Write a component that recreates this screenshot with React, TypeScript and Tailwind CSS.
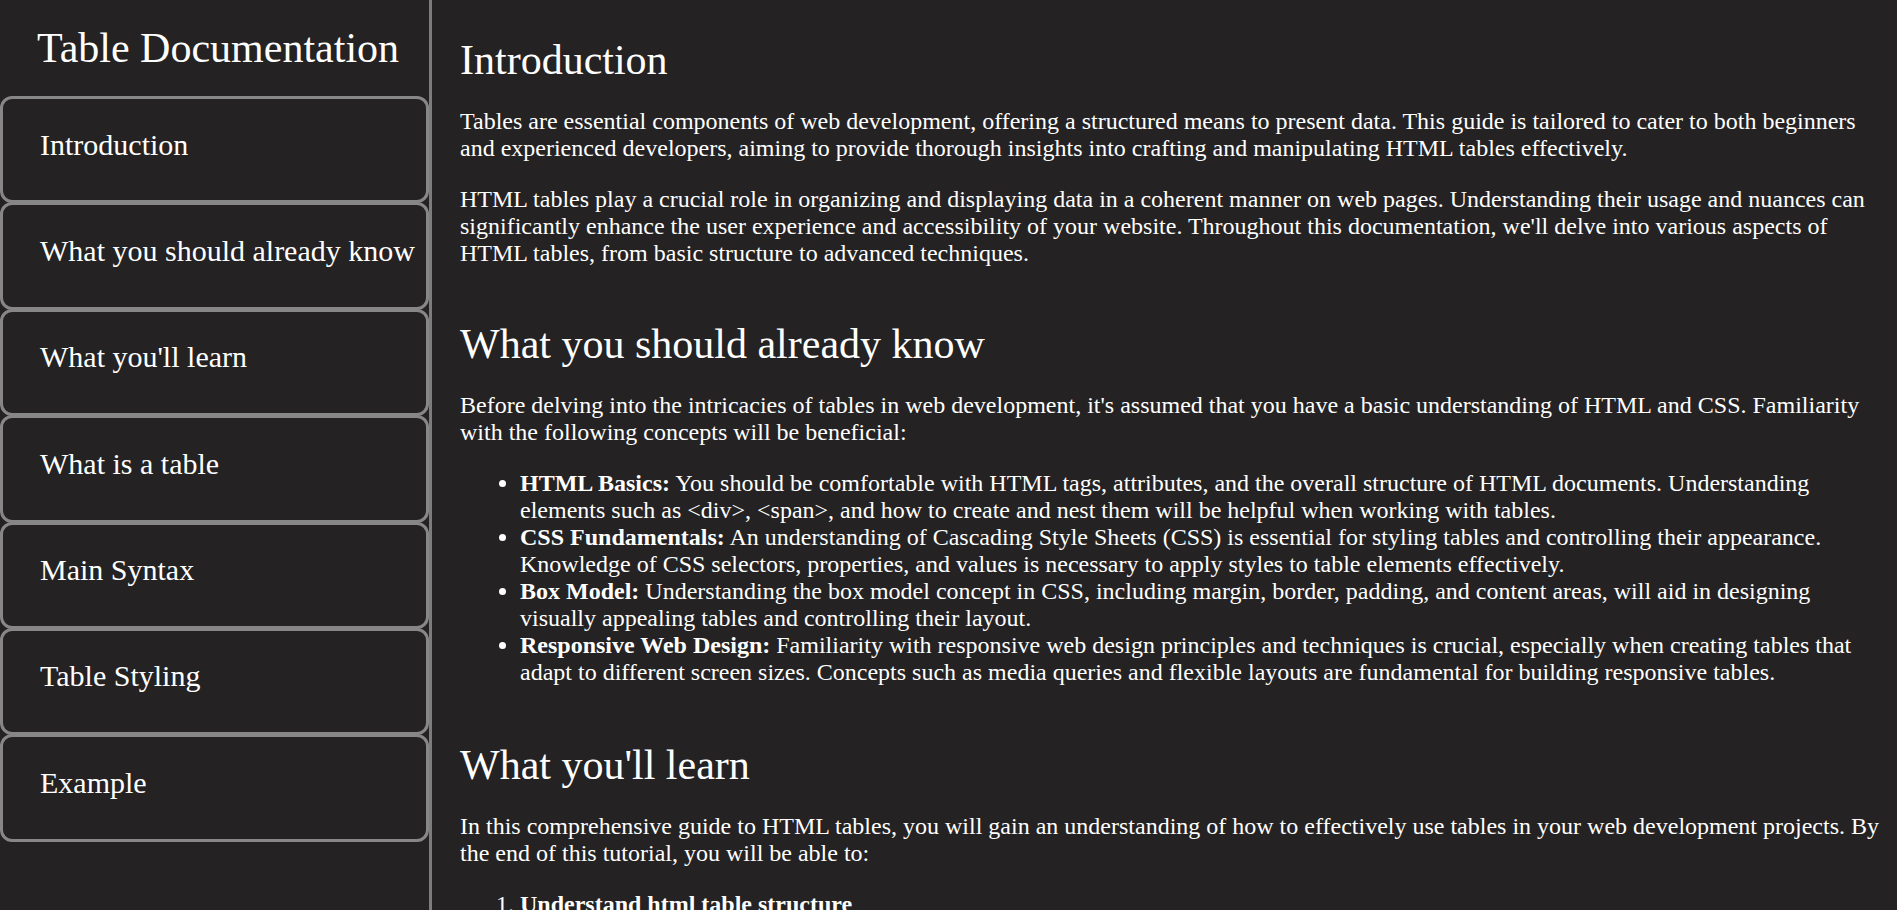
const navItems = [
  "Introduction",
  "What you should already know",
  "What you'll learn",
  "What is a table",
  "Main Syntax",
  "Table Styling",
  "Example",
];

function Sidebar() {
  return (
    <nav className="w-[432px] shrink-0 h-full border-r-[3px] border-[#7d7d7d] flex flex-col">
      <header className="py-6 pl-[7px] text-center text-[42px] leading-[48px]">Table Documentation</header>
      <ul>
        {navItems.map((item, i) => (
          <li
            key={item}
            className={`h-[107.4px] border-[3px] border-[#878787] rounded-xl pl-[37px] pt-[28.5px] text-[30px] leading-[34px] ${
              i > 0 ? "-mt-px" : ""
            }`}
          >
            <a href={`#${item.replace(/ /g, "_")}`}>{item}</a>
          </li>
        ))}
      </ul>
    </nav>
  );
}

function SectionTitle({ children }: { children: React.ReactNode }) {
  return <h2 className="text-[42px] leading-[48px] mb-6">{children}</h2>;
}

export default function App() {
  return (
    <div className="h-screen overflow-hidden flex bg-[#242223] text-white font-['Liberation_Serif',serif]">
      <Sidebar />
      <main className="flex-1 pl-[28px] pr-[12px] pt-[36px] text-[24px] leading-[27px]">
        <section id="Introduction">
          <SectionTitle>Introduction</SectionTitle>
          <p className="my-6">
            Tables are essential components of web development, offering a structured means to present data. This guide
            is tailored to cater to both beginners and experienced developers, aiming to provide thorough insights into
            crafting and manipulating HTML tables effectively.
          </p>
          <p className="my-6">
            HTML tables play a crucial role in organizing and displaying data in a coherent manner on web pages.
            Understanding their usage and nuances can significantly enhance the user experience and accessibility of
            your website. Throughout this documentation, we'll delve into various aspects of HTML tables, from basic
            structure to advanced techniques.
          </p>
        </section>

        <section id="What_you_should_already_know" className="mt-[53px]">
          <SectionTitle>What you should already know</SectionTitle>
          <p className="my-6">
            Before delving into the intricacies of tables in web development, it's assumed that you have a basic
            understanding of HTML and CSS. Familiarity with the following concepts will be beneficial:
          </p>
          <ul className="list-disc pl-[60px] my-6">
            <li>
              <b>HTML Basics:</b> You should be comfortable with HTML tags, attributes, and the overall structure of
              HTML documents. Understanding elements such as &lt;div&gt;, &lt;span&gt;, and how to create and nest them
              will be helpful when working with tables.
            </li>
            <li>
              <b>CSS Fundamentals:</b> An understanding of Cascading Style Sheets (CSS) is essential for styling tables
              and controlling their appearance. Knowledge of CSS selectors, properties, and values is necessary to apply
              styles to table elements effectively.
            </li>
            <li>
              <b>Box Model:</b> Understanding the box model concept in CSS, including margin, border, padding, and
              content areas, will aid in designing visually appealing tables and controlling their layout.
            </li>
            <li>
              <b>Responsive Web Design:</b> Familiarity with responsive web design principles and techniques is crucial,
              especially when creating tables that adapt to different screen sizes. Concepts such as media queries and
              flexible layouts are fundamental for building responsive tables.
            </li>
          </ul>
        </section>

        <section id="What_you'll_learn" className="mt-[55px]">
          <SectionTitle>What you'll learn</SectionTitle>
          <p className="my-6">
            In this comprehensive guide to HTML tables, you will gain an understanding of how to effectively use tables
            in your web development projects. By the end of this tutorial, you will be able to:
          </p>
          <ol className="list-decimal pl-[60px] my-6">
            <li>
              <b>Understand html table structure</b>
            </li>
            <li>
              <b>Create basic tables</b>
            </li>
            <li>
              <b>Style tables with CSS</b>
            </li>
          </ol>
        </section>
      </main>
    </div>
  );
}
